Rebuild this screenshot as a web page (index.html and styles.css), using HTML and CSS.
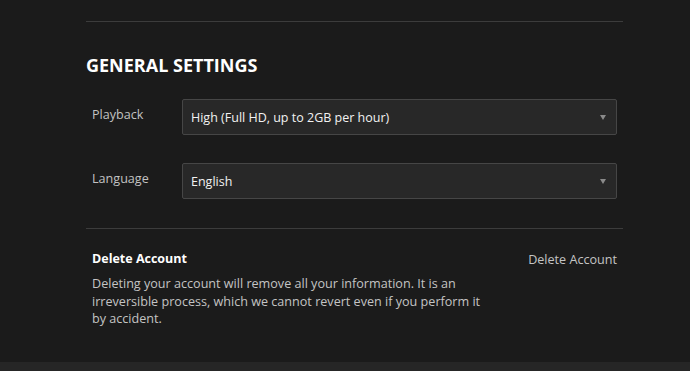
FILE: index.html
```html
<!DOCTYPE html>
<html lang="en">
<head>
    <meta charset="UTF-8">
    <title>Settings</title>
    <link rel="stylesheet" href="styles.css">
</head>
<body>
    <div class="page">
        <div class="settings">
            <hr class="divider top">

            <h2 class="section-title">GENERAL SETTINGS</h2>

            <div class="field">
                <label class="field-label">Playback</label>
                <div class="select">
                    <span>High (Full HD, up to 2GB per hour)</span>
                    <span class="caret"></span>
                </div>
            </div>

            <div class="field">
                <label class="field-label">Language</label>
                <div class="select">
                    <span>English</span>
                    <span class="caret"></span>
                </div>
            </div>

            <hr class="divider">

            <div class="danger">
                <div class="danger-text">
                    <h3>Delete Account</h3>
                    <p>Deleting your account will remove all your information. It is an irreversible process, which we cannot revert even if you perform it by accident.</p>
                </div>
                <a class="danger-link">Delete Account</a>
            </div>
        </div>
    </div>
    <div class="footer"></div>
</body>
</html>
```

FILE: styles.css
```css
* {
    margin: 0;
    padding: 0;
    box-sizing: border-box;
    font-family: 'Open Sans', sans-serif;
}

body {
    background: #1b1b1b;
    color: white;
}

.page {
    height: 362px;
    padding-top: 21px;
}

.settings {
    width: 537px;
    margin-left: 86px;
}

.divider {
    border: none;
    border-top: 1px solid #3c3c3c;
}

.section-title {
    font-size: 18px;
    line-height: 24px;
    font-weight: 700;
    margin-top: 31px;
    margin-bottom: 22px;
}

.field {
    display: flex;
    align-items: center;
    padding-left: 6px;
    margin-bottom: 28px;
}

.field + .field {
    margin-bottom: 29px;
}

.field-label {
    width: 90px;
    font-size: 12.6px;
    color: #c2c2c2;
    margin-top: -6px;
}

.select {
    width: 435px;
    height: 36px;
    background: #282828;
    border: 1px solid #464646;
    border-radius: 2px;
    display: flex;
    align-items: center;
    justify-content: space-between;
    padding: 0 10px 0 8px;
    font-size: 12.5px;
    color: #f2f2f2;
}

.caret {
    width: 0;
    height: 0;
    border-left: 3px solid transparent;
    border-right: 3px solid transparent;
    border-top: 5px solid #8a8a8a;
}

.danger {
    display: flex;
    justify-content: space-between;
    padding: 21px 6px 0 6px;
}

.danger-text {
    width: 400px;
}

.danger-text h3 {
    font-size: 12.5px;
    font-weight: 700;
    margin-bottom: 8px;
}

.danger-text p {
    font-size: 12.6px;
    line-height: 17.5px;
    color: #c4c4c4;
}

.danger-link {
    font-size: 12.6px;
    color: #c4c4c4;
    margin-top: 1px;
}

.footer {
    height: 9px;
    background: #262626;
}
```
